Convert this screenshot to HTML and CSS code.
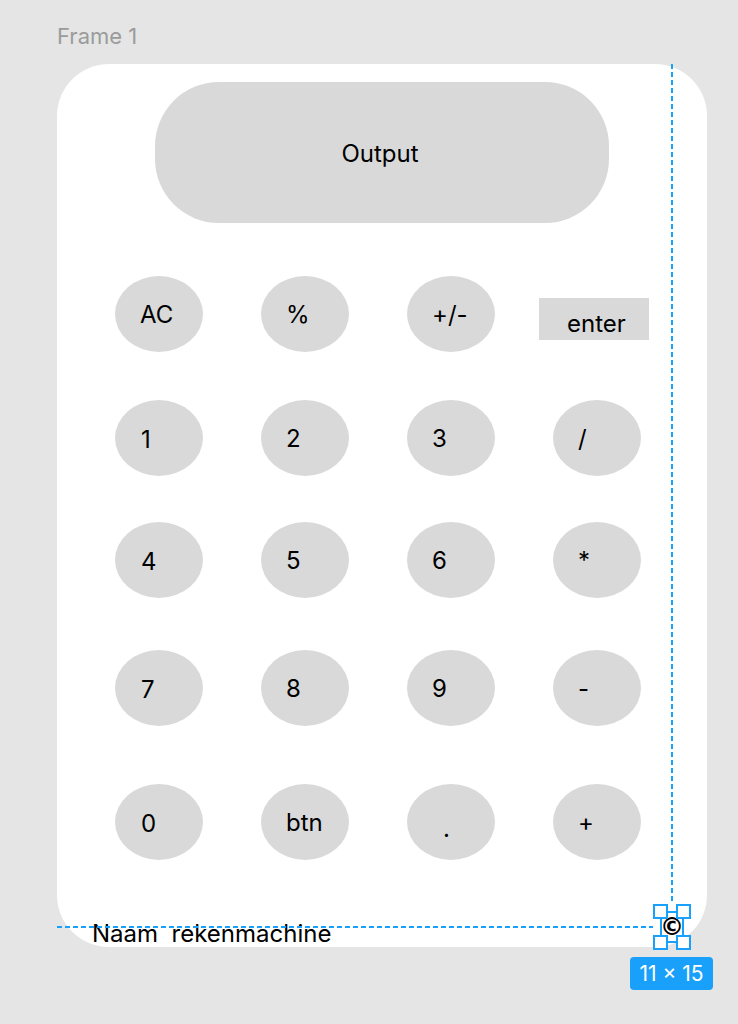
FILE: index.html
```html
<!DOCTYPE html>
<html>
<head>
<meta charset="utf-8">
<link rel="stylesheet" href="styles.css">
</head>
<body>
<div class="canvas">
  <div class="frame-label">Frame 1</div>
  <div class="frame">
    <div class="output">Output</div>
    <div class="keys">
      <div class="key">AC</div>
      <div class="key">%</div>
      <div class="key">+/-</div>
      <div class="enter">enter</div>

      <div class="key key-r">1</div>
      <div class="key">2</div>
      <div class="key">3</div>
      <div class="key">/</div>

      <div class="key key-r">4</div>
      <div class="key">5</div>
      <div class="key">6</div>
      <div class="key">*</div>

      <div class="key key-r">7</div>
      <div class="key">8</div>
      <div class="key">9</div>
      <div class="key">-</div>

      <div class="key key-r">0</div>
      <div class="key">btn</div>
      <div class="key key-dot">.</div>
      <div class="key">+</div>
    </div>
    <div class="name">Naam&nbsp; rekenmachine</div>

    <div class="guide guide-v"></div>
    <div class="guide guide-h"></div>
    <div class="selection">
      <span class="copy">©</span>
      <span class="handle h-tl"></span>
      <span class="handle h-tr"></span>
      <span class="handle h-bl"></span>
      <span class="handle h-br"></span>
    </div>
    <div class="size-badge">11 × 15</div>
  </div>
</div>
</body>
</html>
```

FILE: styles.css
```css
* { box-sizing: border-box; }

html, body {
  margin: 0;
  padding: 0;
  background: #e5e5e5;
  font-family: Inter, "Noto Sans", sans-serif;
  color: #000;
}

.canvas {
  width: 738px;
  height: 1024px;
  padding: 22px 0 0 57px;
  overflow: hidden;
}

.frame-label {
  font-size: 22px;
  line-height: 28px;
  color: #9b9b9b;
  height: 42px;
}

.frame {
  position: relative;
  width: 650px;
  height: 883px;
  background: #fff;
  border-radius: 52px;
  padding: 18px 0 0 0;
}

.output {
  width: 454px;
  height: 141px;
  margin-left: 98px;
  background: #d9d9d9;
  border-radius: 64px;
  display: flex;
  align-items: center;
  justify-content: center;
  font-size: 24px;
  padding: 2px 4px 0 0;
}

.keys {
  margin: 53px 0 0 58px;
  display: grid;
  grid-template-columns: repeat(4, 88px);
  column-gap: 58px;
  grid-template-rows: 124px 122px 128px 134px 76px;
  align-items: start;
}

.key {
  width: 88px;
  height: 76px;
  border-radius: 50%;
  background: #d9d9d9;
  display: flex;
  align-items: center;
  padding-left: 25px;
  font-size: 24px;
  line-height: 29px;
}

.key-r { padding-left: 26px; padding-top: 2px; }

.key-dot { padding-left: 36px; padding-top: 12px; }

.enter {
  width: 110px;
  height: 42px;
  margin: 22px 0 0 -14px;
  background: #d9d9d9;
  font-size: 24px;
  line-height: 29px;
  padding: 11px 0 0 28px;
}

.name {
  margin: 59px 0 0 35px;
  font-size: 24px;
  line-height: 29px;
  white-space: nowrap;
}

.guide {
  position: absolute;
}

.guide-v {
  left: 614px;
  top: 0;
  width: 2px;
  height: 840px;
  background: repeating-linear-gradient(to bottom, #18a0fb 0 5px, transparent 5px 8px);
}

.guide-h {
  left: 0;
  top: 862px;
  width: 596px;
  height: 2px;
  background: repeating-linear-gradient(to right, #18a0fb 0 5px, transparent 5px 8px);
}

.selection {
  position: absolute;
  left: 603px;
  top: 847px;
  width: 24px;
  height: 32px;
  border: 2px solid #18a0fb;
  display: flex;
  align-items: center;
  justify-content: center;
}

.copy {
  font-size: 24px;
  line-height: 1;
  font-weight: bold;
  font-family: "DejaVu Sans", sans-serif;
}

.handle {
  position: absolute;
  width: 15px;
  height: 15px;
  background: #fff;
  border: 2px solid #18a0fb;
}

.h-tl { left: -9px; top: -9px; }
.h-tr { right: -9px; top: -9px; }
.h-bl { left: -9px; bottom: -9px; }
.h-br { right: -9px; bottom: -9px; }

.size-badge {
  position: absolute;
  left: 573px;
  top: 893px;
  width: 83px;
  height: 33px;
  border-radius: 4px;
  background: #18a0fb;
  color: #fff;
  font-size: 21px;
  display: flex;
  align-items: center;
  justify-content: center;
}
```
